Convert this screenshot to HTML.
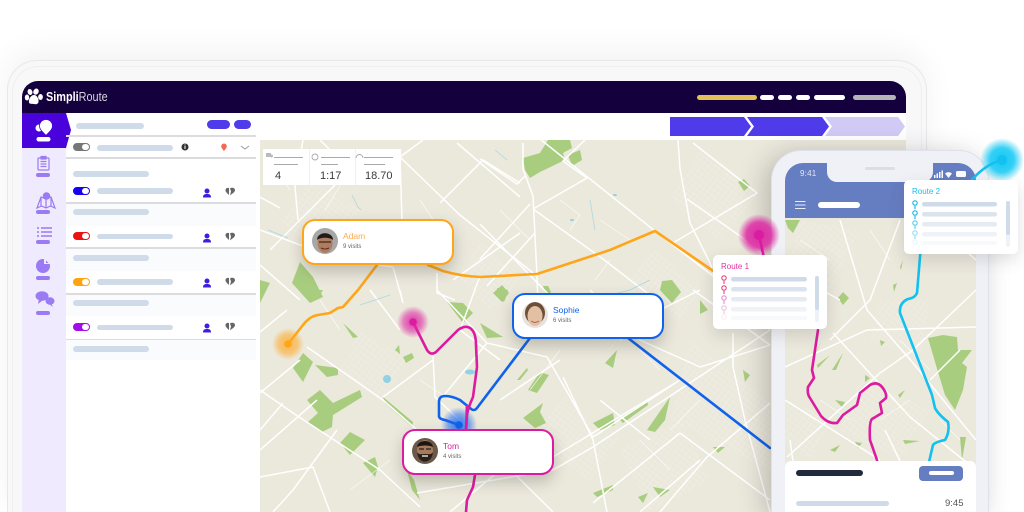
<!DOCTYPE html>
<html><head><meta charset="utf-8"><style>
html,body{margin:0;padding:0;width:1024px;height:512px;overflow:hidden;background:#fff;font-family:"Liberation Sans",sans-serif}
#w{position:relative;width:1024px;height:512px;overflow:hidden;background:#fff;filter:blur(.35px)}
.a{position:absolute}
.bar{position:absolute;border-radius:4px;background:#cfdbe9}
.line{position:absolute;left:66px;width:190px;height:1.5px;background:#dcdcde}
.tg{position:absolute;left:73px;width:15px;height:6px;border-radius:5px;border:1px solid}
.tg i{position:absolute;right:0;top:0;width:7px;height:6px;background:#fff;border-radius:3px}
.card{position:absolute;width:148px;height:42px;background:#fff;border:2px solid;border-radius:13px;box-shadow:0 7px 14px rgba(60,60,50,.26)}
.card b{position:absolute;left:39px;top:10px;font-size:8.5px;font-weight:400}
.card span{position:absolute;left:39px;top:23px;font-size:6px;color:#666}
.card svg{position:absolute;left:8px;top:7px}
.rc{position:absolute;width:114px;height:74px;background:#fff;border-radius:5px;box-shadow:0 6px 16px rgba(60,60,60,.16)}
.rc b{position:absolute;left:8px;top:7px;font-size:8px;font-weight:400}
.nb{position:absolute;left:36px;width:14px;height:4px;border-radius:2px;background:#9a7bf3}
.st{position:absolute;top:170px;font-size:11px;line-height:13px;color:#3a3a3a}
.sb{position:absolute;height:1.5px;background:#aaa}
</style></head><body><div id="w">
<div class="a" style="left:7px;top:60px;width:918px;height:451px;background:#f8f8f9;border:1px solid #e8e8ec;border-bottom:0;border-radius:30px 30px 0 0;box-shadow:0 -10px 30px rgba(0,0,0,.05)"></div>
<div class="a" style="left:12px;top:66px;width:908px;height:445px;background:#f8f8f9;border:1px solid #efeff2;border-bottom:0;border-radius:26px 26px 0 0"></div>
<div class="a" style="left:22px;top:81px;width:884px;height:431px;background:#fff;border-radius:16px 16px 0 0;overflow:hidden">
 <div class="a" style="left:0;top:0;width:884px;height:32px;background:#14003c"></div>
</div>
<!-- logo -->
<svg class="a" style="left:24px;top:88px" width="20" height="18" viewBox="0 0 20 18" fill="#fff"><ellipse cx="6" cy="4" rx="2.4" ry="3" transform="rotate(-20 6 4)"/><ellipse cx="12" cy="3.6" rx="2.6" ry="3.2" transform="rotate(25 12 3.6)"/><ellipse cx="3" cy="9.5" rx="2.2" ry="3"/><ellipse cx="16.5" cy="9" rx="2.4" ry="3"/><path d="M10 7c3 0 5 4 4.500 7-.4 2.300-3 2.500-4.500 2s-4.500.5-5-1.500C4.300 11 7 7 10 7z"/></svg>
<div class="a" style="left:46px;top:90px;font-size:12.5px;line-height:15px;color:#fff;font-weight:700;transform:scaleX(.87);transform-origin:0 0;white-space:nowrap">Simpli<span style="font-weight:400;color:#d5d2de">Route</span></div>
<!-- header bars -->
<div class="bar" style="left:697px;top:95px;width:60px;height:5px;background:#e2c158"></div>
<div class="bar" style="left:760px;top:95px;width:14px;height:5px;background:#fff"></div>
<div class="bar" style="left:778px;top:95px;width:14px;height:5px;background:#fff"></div>
<div class="bar" style="left:796px;top:95px;width:14px;height:5px;background:#fff"></div>
<div class="bar" style="left:814px;top:95px;width:31px;height:5px;background:#fff"></div>
<div class="bar" style="left:853px;top:95px;width:43px;height:5px;background:#b5b5b8"></div>
<!-- steps -->
<svg class="a" style="left:660px;top:113px" width="250" height="28"><polygon points="165,4 238,4 245,13.500 238,23 165,23 172,13.500" fill="#d0caf4"/><polygon points="87,4 162,4 169,13.500 162,23 87,23 94,13.500" fill="#4f3bea"/><polygon points="10,4 84,4 91,13.500 84,23 10,23" fill="#4f3bea"/></svg>
<!-- sidebar -->
<div class="a" style="left:22px;top:148px;width:44px;height:364px;background:#efeafd"></div>
<svg class="a" style="left:22px;top:113px" width="50" height="36"><polygon points="0,0 44,0 49,17 44,35 0,35" fill="#4a02dc"/><g fill="#fff"><circle cx="17" cy="15" r="3.500"/><path d="M24 6.500a6.500 6.500 0 0 1 6.500 6.500c0 4-4 6.500-6.500 9.500-2.500-3-6.500-5.500-6.500-9.500a6.500 6.500 0 0 1 6.500-6.500z" stroke="#4a02dc" stroke-width=".8"/><rect x="14.500" y="24" width="14" height="4.500" rx="2.200"/></g></svg>
<svg class="a" style="left:22px;top:150px" width="44" height="170" fill="none" stroke="#9a7bf3" stroke-width="1.200">
 <rect x="16" y="8" width="11" height="12" rx="1"/><rect x="19" y="6.500" width="5" height="2.500" fill="#9a7bf3"/><path d="M18.500 11.500h6M18.500 14h6M18.500 16.500h6"/>
 <path d="M15 58l4-11 5 2 5-2 4 11-4.500-2-4.500 2-4.500-2z"/><path d="M19 47v9M24 49v9M29 47v9"/><circle cx="24.500" cy="46" r="3.800" fill="#9a7bf3" stroke="none"/>
 <path d="M15 78h2M19 78h11M15 82h2M19 82h11M15 86h2M19 86h11" stroke-width="1.600"/>
 <circle cx="21" cy="116" r="7" fill="#9a7bf3" stroke="none"/><path d="M22 109h5l2 5h-7z" fill="#efeafd" stroke="none"/><path d="M24 110.500l2.500 2.500h-2.500z" fill="#9a7bf3" stroke="none"/>
 <ellipse cx="20" cy="146" rx="6.500" ry="4.800" fill="#9a7bf3" stroke="none"/><path d="M17 149l-1 5 5-4z" fill="#9a7bf3" stroke="none"/><ellipse cx="28" cy="151" rx="4.500" ry="3.800" fill="#9a7bf3" stroke="none"/><path d="M29 153l2 4-4-3z" fill="#9a7bf3" stroke="none"/>
</svg>
<div class="nb" style="top:173px"></div><div class="nb" style="top:210px"></div><div class="nb" style="top:240px"></div><div class="nb" style="top:276px"></div><div class="nb" style="top:311px"></div>
<!-- list -->
<div class="a" style="left:66px;top:203px;width:190px;height:23px;background:#fafbfc"></div>
<div class="a" style="left:66px;top:249px;width:190px;height:22px;background:#fafbfc"></div>
<div class="a" style="left:66px;top:294px;width:190px;height:22px;background:#fafbfc"></div>
<div class="a" style="left:66px;top:340px;width:190px;height:20px;background:#fafbfc"></div>
<div class="line" style="top:135px"></div><div class="line" style="top:157px"></div><div class="line" style="top:202px"></div><div class="line" style="top:247px"></div><div class="line" style="top:293px"></div><div class="line" style="top:338.500px"></div>
<div class="bar" style="left:76px;top:123px;width:68px;height:6px"></div>
<div class="bar" style="left:207px;top:120px;width:23px;height:9px;background:#4f3bea;border-radius:5px"></div>
<div class="bar" style="left:234px;top:120px;width:17px;height:9px;background:#4f3bea;border-radius:5px"></div>
<div class="tg" style="top:143px;background:#777;border-color:#777"><i></i></div>
<div class="bar" style="left:97px;top:145px;width:76px;height:5.500px"></div>
<div class="bar" style="left:73px;top:171px;width:76px;height:5.500px"></div>
<div class="tg" style="top:187px;background:#1a00f0;border-color:#1a00f0"><i></i></div>
<div class="bar" style="left:97px;top:188px;width:76px;height:5.500px"></div>
<div class="bar" style="left:73px;top:209px;width:76px;height:5.500px"></div>
<div class="tg" style="top:232px;background:#ee1111;border-color:#ee1111"><i></i></div>
<div class="bar" style="left:97px;top:233.500px;width:76px;height:5.500px"></div>
<div class="bar" style="left:73px;top:255px;width:76px;height:5.500px"></div>
<div class="tg" style="top:278px;background:#ffa40f;border-color:#ffa40f"><i></i></div>
<div class="bar" style="left:97px;top:279px;width:76px;height:5.500px"></div>
<div class="bar" style="left:73px;top:300px;width:76px;height:5.500px"></div>
<div class="tg" style="top:323px;background:#a30fe8;border-color:#a30fe8"><i></i></div>
<div class="bar" style="left:97px;top:324.500px;width:76px;height:5.500px"></div>
<div class="bar" style="left:73px;top:346px;width:76px;height:5.500px"></div>
<svg class="a" style="left:170px;top:135px" width="90" height="205">
 <circle cx="15" cy="12" r="3.500" fill="#333"/><rect x="14.500" y="11" width="1" height="3" fill="#fff"/><rect x="14.500" y="9.500" width="1" height="1" fill="#fff"/>
 <path d="M54 8.500a2.800 2.800 0 0 1 2.800 2.800c0 2-1.800 3-2.800 5-1-2-2.800-3-2.800-5A2.800 2.800 0 0 1 54 8.500z" fill="#f26a55"/>
 <path d="M71 11l4 3 4-3" fill="none" stroke="#999" stroke-width=".9"/>
 <defs><g id="p"><circle cx="37" cy="0" r="2.500" fill="#3d1fe0"/><path d="M33 6.500c0-3 1.500-3.500 4-3.500s4 .5 4 3.500z" fill="#3d1fe0"/><path d="M59 -3c-2-.5-3.500.5-3.500 2 0 2 1.500 3 3.500 5z" fill="#666"/><path d="M60 4.500l1-4-1-3c2-1.500 5-.5 5 1.500 0 2.500-3 3.500-5 5.500z" fill="#666"/></g></defs>
 <use href="#p" y="56"/><use href="#p" y="101"/><use href="#p" y="146"/><use href="#p" y="191"/>
</svg>
<!-- MAP -->
<svg class="a" style="left:260px;top:140px" width="646" height="372" viewBox="260 140 646 372">
 <defs>
  <pattern id="h" width="5" height="5" patternUnits="userSpaceOnUse" patternTransform="rotate(38)"><path d="M0 0H5M0 0V5" stroke="#fff" stroke-width=".5" opacity=".55"/></pattern>
  <radialGradient id="gO"><stop offset="0" stop-color="#ffa51a" stop-opacity=".75"/><stop offset=".6" stop-color="#ffa51a" stop-opacity=".5"/><stop offset="1" stop-color="#ffa51a" stop-opacity="0"/></radialGradient>
  <radialGradient id="gM"><stop offset="0" stop-color="#dd2aa4" stop-opacity=".95"/><stop offset=".6" stop-color="#dd2aa4" stop-opacity=".55"/><stop offset="1" stop-color="#dd2aa4" stop-opacity="0"/></radialGradient>
  <radialGradient id="gB"><stop offset="0" stop-color="#1a66ee" stop-opacity=".9"/><stop offset=".6" stop-color="#1a66ee" stop-opacity=".5"/><stop offset="1" stop-color="#1a66ee" stop-opacity="0"/></radialGradient>
 </defs>
 <rect x="260" y="140" width="646" height="372" fill="#ebe8dc"/>
 <g fill="url(#h)">
  <polygon points="700,150 760,190 720,240 670,200"/><polygon points="655,250 700,290 680,320 630,280"/><polygon points="480,240 520,280 490,310 460,280"/>
  <polygon points="360,330 410,360 380,400 340,370"/><polygon points="560,400 620,440 590,480 530,440"/><polygon points="620,450 680,420 710,480 650,512"/>
  <polygon points="690,340 770,400 770,470 670,420"/><polygon points="280,220 310,180 360,210 330,260"/><polygon points="600,290 640,320 610,350 570,320"/>
 </g>
 <g fill="#a9cd7f">
  <polygon points="523,158 540,153 548,140 570,140 572,148 563,153 565,160 540,172 530,178 525,170"/><polygon points="568,155 580,150 582,160 572,166"/>
  <polygon points="738,182 744,179 750,186 744,191"/><polygon points="662,281 672,280 681,292 672,303 660,290"/><polygon points="497,288 508,290 504,302 497,297"/><polygon points="543,286 548,286 551,292 547,296"/>
  <polygon points="293,368 303,353 313,362 303,382"/><polygon points="315,365 338,368 338,375 327,377"/>
  <polygon points="307,400 320,390 333,403 360,390 362,397 333,415 332,427 322,432 308,422 318,413"/>
  <polygon points="383,397 413,422 412,427 385,403"/><polygon points="340,443 350,432 365,440 350,455"/><polygon points="363,463 375,457 378,467 375,477"/>
  <polygon points="343,323 358,337 353,338"/><polygon points="403,357 412,353 414,358 406,363"/><polygon points="395,350 399,345 400,354"/>
  <polygon points="528,390 540,372 549,375 537,393"/><polygon points="517,380 527,368 528,370 520,380"/>
  <polygon points="523,418 543,403 540,412 546,423 535,428"/><polygon points="593,423 613,413 615,425 600,430"/><polygon points="605,363 617,350 613,368"/>
  <polygon points="620,420 647,400 648,405 623,423"/><polygon points="647,430 670,397 665,420 655,432"/><polygon points="593,493 613,485 613,490 597,497"/>
  <polygon points="447,302 463,303 473,313 463,323"/><polygon points="480,323 503,337 487,338"/><polygon points="653,487 670,490 660,497"/><polygon points="638,497 648,493 643,503"/>
  <polygon points="500,290 508,290 505,300 495,293"/><polygon points="303,290 323,290 317,300"/><polygon points="292,283 300,262 313,277 323,297 310,303"/><polygon points="260,280 270,283 260,303"/>
  <polygon points="493,293 502,285 509,293 502,302"/><polygon points="407,470 414,480 420,500 412,490"/><polygon points="743,370 750,375 745,382"/><polygon points="713,447 725,447 718,453"/><polygon points="567,310 575,315 570,320"/><polygon points="700,300 708,310 700,314"/>
 </g>
 <g fill="none" stroke="#fff" stroke-width="1.500">
  <path d="M480 159L517 184 525 176M540 139L655 231 713 276 770 330M523 143V169L533 196 537 276 538 306M480 224L560 306M533 209L587 178 563 161 585 140M533 209L603 259 647 293M678 140L680 169 690 223 710 263 722 300M687 199L740 236 770 260M673 243L757 193 693 143M480 259L530 204M535 233L487 286"/>
  <path d="M303 140L295 187 298 220M260 197L280 208M400 157L402 220M423 140L400 157 460 215 537 276M457 143L520 197M440 203L483 160 520 183M520 233L453 280M393 267L403 303 400 290M437 273V293L455 300"/>
  <path d="M260 390L293 413 380 470 420 507M260 332L287 310M260 393L300 360M307 347L383 400 417 430M433 355L435 397 470 430M383 397L433 360M370 290L400 330M437 290L487 343 547 357 593 437 680 380M260 477L313 467 330 512M260 450L317 400M283 403L260 430M337 430L293 490 273 512M563 377L593 440 607 512M553 457L680 380M680 433L593 503M417 493L553 470 593 447 770 330M487 343L440 400M470 430L553 512M500 400L560 360M693 290L770 345M700 367L770 345M733 333V367L745 420 770 512M770 403L707 457 660 512M680 433L770 500M590 290L640 340 700 367"/>
  <path d="M260 230L340 260 393 267M260 265L300 300M320 140L360 180M340 180L310 210 270 250M480 276L460 330 500 360M600 400L650 440M620 340L660 310 700 290M500 470L450 512M640 512L700 460"/>
 </g>
 <g fill="none" stroke="#fff" stroke-width=".7" opacity=".8">
  <path d="M270 160l20 30M350 170l-25 40M420 200l20 30M500 210l30 30M560 200l20 15-10 15M600 220l30 20M610 260l-15 20M320 300l20 30M560 350l-30 40M640 350l20 20M700 400l-30 30M640 440l30 30M350 490l40-30M420 380l30 20M500 440l30 30"/>
 </g>
 <g fill="none" stroke="#8fd2e4" stroke-width=".8" opacity=".7"><path d="M352 195l6 12 3 3M268 230l20 8M360 305l30-10M495 150l12 10M590 200l5 30M650 280l-20 10-20 5"/></g>
 <g fill="#8fd2e4"><ellipse cx="387" cy="379" rx="4" ry="4"/><ellipse cx="470" cy="372" rx="5" ry="2.500"/><ellipse cx="615" cy="195" rx="2" ry="1"/><ellipse cx="572" cy="220" rx="2" ry="1"/></g>
 <!-- routes -->
 <g fill="none" stroke-width="2.600" stroke-linecap="round" stroke-linejoin="round">
  <path d="M288 344L303 325Q310 316 318 315L330 313 338 308 343 307 358 290 377 265M428 265L443 271Q460 276 480 277L537 274 610 250 655 231 722 277" stroke="#ffa51a"/>
  <path d="M530 338L477 408Q474 412 470 408L460 400Q452 396 445 396 439 396 439 402V416Q439 419 445 420L459 425M628 338L770 448" stroke="#0f62ee"/>
  <path d="M413 322L427 350Q431 356 436 352L458 330Q465 325 470 328 476 332 476 345L477 367 473 397Q468 408 467 415L466 430M475 475L473 487 467 500 466 512" stroke="#db1ba0"/>
 </g>
 <circle cx="288" cy="344" r="16" fill="url(#gO)"/><circle cx="288" cy="344" r="3.800" fill="#ffa51a"/>
 <circle cx="413" cy="322" r="16" fill="url(#gM)"/><circle cx="413" cy="322" r="3.800" fill="#db1ba0"/>
 <circle cx="459" cy="425" r="18" fill="url(#gB)"/><circle cx="459" cy="425" r="3.800" fill="#0f62ee"/>
 <path d="M467 405L466 430" stroke="#db1ba0" stroke-width="2.600"/>
</svg>
<!-- stats -->
<div class="a" style="left:263px;top:149px;width:138px;height:36px;background:#fff"></div>
<div class="a" style="left:309px;top:149px;width:1px;height:36px;background:#f0f0f0"></div>
<div class="a" style="left:355px;top:149px;width:1px;height:36px;background:#f0f0f0"></div>
<svg class="a" style="left:263px;top:149px" width="138" height="36"><rect x="3" y="4" width="5" height="4" fill="#bbb"/><circle cx="8.500" cy="7" r="1.500" fill="#bbb"/><circle cx="52" cy="8" r="3" fill="none" stroke="#aaa" stroke-width=".9"/><path d="M93 9a3.500 3.500 0 0 1 7 0" fill="none" stroke="#aaa" stroke-width=".9"/></svg>
<div class="sb" style="left:274px;top:156.500px;width:29px"></div><div class="sb" style="left:274px;top:163.500px;width:24px"></div>
<div class="sb" style="left:321px;top:156.500px;width:29px"></div><div class="sb" style="left:321px;top:163.500px;width:17px"></div>
<div class="sb" style="left:364px;top:156.500px;width:29px"></div><div class="sb" style="left:364px;top:163.500px;width:21px"></div>
<div class="st" style="left:275px">4</div><div class="st" style="left:320px">1:17</div><div class="st" style="left:365px">18.70</div>
<!-- PHONE -->
<div class="a" style="left:771px;top:150px;width:216px;height:361px;background:#f0f1f6;border:1px solid #dfe1ea;border-bottom:0;border-radius:30px 30px 0 0;box-shadow:-6px 4px 26px rgba(40,40,40,.25)"></div>
<div class="a" style="left:785px;top:163px;width:191px;height:349px;background:#ebe8dc;border-radius:18px 18px 0 0;overflow:hidden">
 <svg class="a" style="left:0;top:0" width="191" height="349" viewBox="785 163 191 349">
  <g fill="url(#h)"><polygon points="800,220 860,230 830,290 790,260"/><polygon points="860,380 930,410 900,460 840,430"/><polygon points="790,400 830,420 810,460 785,440"/><polygon points="880,300 930,300 920,360 870,340"/></g>
  <g fill="#a9cd7f"><polygon points="785,220 800,220 793,233 788,228"/><polygon points="838,298 843,292 849,298 843,305"/><polygon points="928,338 943,335 957,337 958,350 972,350 962,363 967,367 963,390 955,410 945,395 938,372"/><polygon points="960,437 966,437 962,460"/><polygon points="855,442 862,443 858,448"/><polygon points="817,365 830,355 818,368"/><polygon points="832,370 843,353 836,370"/><polygon points="817,350 822,340 812,362"/><polygon points="835,400 845,402 842,407"/><polygon points="898,395 905,390 900,398"/><polygon points="865,375 870,378 865,382"/><polygon points="900,267 903,260 901,270"/><polygon points="893,285 897,283 894,292"/><polygon points="880,340 885,342 881,346"/><polygon points="903,440 920,441 905,444"/><polygon points="830,450 840,445 835,452"/></g>
  <g fill="none" stroke="#fff" stroke-width="1.500">
   <path d="M785 367L867 330 977 327M853 263L867 310 913 363 976 440M787 457L880 373 913 350 976 290M833 333L910 417 976 470M785 400L880 460M840 220L853 263M900 220L870 300 830 340M785 270L840 300M930 220L976 260M790 440L800 512M885 430L900 461M950 220L976 210M930 380L960 350"/>
  </g>
  <g fill="none" stroke="#fff" stroke-width=".7" opacity=".8"><path d="M800 240l30 20M870 230l20 30M900 340l30 30M820 400l30 20M880 420l30-20M940 420l20 20M800 300l20 30"/></g>
  <g fill="none" stroke-width="2.600" stroke-linecap="round" stroke-linejoin="round">
   <path d="M818 330L812 370 814 378 808 387Q807 394 810 398L821 416Q828 424 837 423L843 415 857 405 860 393 870 385Q877 381 882 387 887 393 886 398L880 403 882 413 872 419Q869 422 870 440L877 460" stroke="#db1ba0"/>
   <path d="M921 245L917 293Q915 298 908 299 899 303 900 313L932 395 935 408Q938 414 948 422 950 432 945 440 935 442 933 445L929 462" stroke="#12c1ef"/>
  </g>
 </svg>
 <div class="a" style="left:0;top:0;width:191px;height:55px;background:#657dc1"></div>
 <div class="a" style="left:42px;top:0;width:106px;height:19px;background:#f0f1f6;border-radius:0 0 10px 10px"></div>
 <div class="a" style="left:0;top:298px;width:191px;height:51px;background:#fff;border-radius:6px 6px 0 0"></div>
</div>
<div class="a" style="left:865px;top:167px;width:30px;height:2.500px;border-radius:2px;background:#dcdee6"></div>
<div class="a" style="left:800px;top:169px;font-size:8px;color:#e4e8f4;line-height:10px;letter-spacing:.2px">9:41</div>
<svg class="a" style="left:934px;top:169px" width="36" height="11" fill="#fff"><rect x="0" y="6" width="1.500" height="3"/><rect x="2.500" y="4.500" width="1.500" height="4.500"/><rect x="5" y="3" width="1.500" height="6"/><rect x="7.500" y="1.500" width="1.500" height="7.500"/><path d="M11 4.500a5 5 0 0 1 7 0l-3.500 4.500z"/><rect x="22" y="2" width="10" height="6" rx="1.500"/></svg>
<svg class="a" style="left:795px;top:200px" width="11" height="10" stroke="#e8ecf6" stroke-width="1"><path d="M0 1.500H10.500M0 5H10.500M0 8.500H10.500"/></svg>
<div class="a" style="left:818px;top:202px;width:42px;height:6px;border-radius:3px;background:#fff"></div>
<div class="a" style="left:796px;top:470px;width:67px;height:6px;border-radius:3px;background:#222a3d"></div>
<div class="a" style="left:919px;top:466px;width:44px;height:15px;border-radius:4px;background:#657dc1"></div>
<div class="a" style="left:929px;top:471px;width:25px;height:4px;border-radius:2px;background:#fff"></div>
<div class="bar" style="left:796px;top:501px;width:93px;height:5px"></div>
<div class="a" style="left:945px;top:498px;font-size:9.500px;line-height:11px;color:#555">9:45</div>
<!-- cards -->
<div class="card" style="left:302px;top:219px;border-color:#ffa51a"><svg width="26" height="26"><clipPath id="c1"><circle cx="13" cy="13" r="13"/></clipPath><g clip-path="url(#c1)"><rect width="26" height="26" fill="#a9a7a6"/><ellipse cx="13" cy="15" rx="7.500" ry="10" fill="#b07c60"/><path d="M5 12c0-9 16-9 16 0-3-3-13-3-16 0z" fill="#1f1b18"/><path d="M7 14h12" stroke="#3a2a22" stroke-width="1.200"/><path d="M9 20c3 1.500 5 1.500 8 0" stroke="#5a2a22" fill="none"/></g></svg><b style="color:#ffa94d">Adam</b><span>9 visits</span></div>
<div class="card" style="left:512px;top:293px;border-color:#0f62ee"><svg width="26" height="26"><clipPath id="c2"><circle cx="13" cy="13" r="13"/></clipPath><g clip-path="url(#c2)"><rect width="26" height="26" fill="#e8e2da"/><ellipse cx="13" cy="11" rx="10" ry="11" fill="#6b4f36"/><ellipse cx="13" cy="14" rx="7.500" ry="10" fill="#e3bfa4"/><path d="M9 19c3 2 5 2 8 0" stroke="#b0604e" fill="none"/></g></svg><b style="color:#0f62ee">Sophie</b><span>6 visits</span></div>
<div class="card" style="left:402px;top:429px;border-color:#db1ba0"><svg width="26" height="26"><clipPath id="c3"><circle cx="13" cy="13" r="13"/></clipPath><g clip-path="url(#c3)"><rect width="26" height="26" fill="#6b5a4a"/><ellipse cx="13" cy="13" rx="8" ry="11" fill="#a87a5c"/><path d="M5 9c1-8 15-8 16 0-4-2-12-2-16 0z" fill="#1c1612"/><path d="M5 14c1 13 15 13 16 0-2 3-4 2-8 2s-6 1-8-2z" fill="#2a2019"/><path d="M7 11h5M14 11h5" stroke="#222" stroke-width="1.300"/><path d="M10 18h6" stroke="#fff" stroke-width="1.200"/></g></svg><b style="color:#db1ba0">Tom</b><span>4 visits</span></div>
<!-- glows and route cards -->
<svg class="a" style="left:730px;top:130px" width="294" height="130" viewBox="730 130 294 130">
 <defs><radialGradient id="gC"><stop offset="0" stop-color="#12c8f4"/><stop offset=".55" stop-color="#12c8f4" stop-opacity=".85"/><stop offset="1" stop-color="#12c8f4" stop-opacity="0"/></radialGradient><radialGradient id="gP2"><stop offset="0" stop-color="#dd2aa4"/><stop offset=".6" stop-color="#dd2aa4" stop-opacity=".85"/><stop offset="1" stop-color="#dd2aa4" stop-opacity="0"/></radialGradient></defs>
 <circle cx="759" cy="235" r="21" fill="url(#gP2)"/><circle cx="759" cy="235" r="5" fill="#db1ba0"/><path d="M759 235L764 258" stroke="#db1ba0" stroke-width="2.600"/>
 <circle cx="1002" cy="160" r="22" fill="url(#gC)"/><circle cx="1002" cy="160" r="5" fill="#12c1ef"/><path d="M1002 160C990 163 980 170 970 182" fill="none" stroke="#12c1ef" stroke-width="2.600"/>
</svg>
<div class="rc" style="left:713px;top:255px"><b style="color:#e0309f">Route 1</b>
 <svg class="a" style="left:0;top:0" width="114" height="74"><g fill="none" stroke="#e8437f" stroke-width="1.100"><g><circle cx="11" cy="23" r="2.200"/><path d="M11 26v3"/></g><g><circle cx="11" cy="33" r="2.200"/><path d="M11 36v3"/></g><g opacity=".6" stroke="#d048a8"><circle cx="11" cy="43" r="2.200"/><path d="M11 46v3"/></g><g opacity=".35" stroke="#d048a8"><circle cx="11" cy="53" r="2.200"/><path d="M11 56v3"/></g><g opacity=".1"><circle cx="11" cy="62" r="2.200"/></g></g><g><rect x="18" y="22" width="76" height="4.500" rx="2.200" fill="#cfdbe9"/><rect x="18" y="32" width="76" height="4.500" rx="2.200" fill="#dbe3ee"/><rect x="18" y="42" width="76" height="4.500" rx="2.200" fill="#e6ebf3"/><rect x="18" y="52" width="76" height="4.500" rx="2.200" fill="#eff2f7"/><rect x="18" y="61" width="76" height="4" rx="2" fill="#f8f9fb"/><rect x="102" y="21" width="4" height="46" rx="2" fill="#eef1f6"/><rect x="102" y="21" width="4" height="34" rx="2" fill="#cfdbe9"/></g></svg></div>
<div class="rc" style="left:904px;top:180px;height:74px"><b style="color:#12c1ef">Route 2</b>
 <svg class="a" style="left:0;top:0" width="114" height="74"><g fill="none" stroke="#12b5e5" stroke-width="1.100"><g><circle cx="11" cy="23" r="2.200"/><path d="M11 26v3"/></g><g><circle cx="11" cy="33" r="2.200"/><path d="M11 36v3"/></g><g opacity=".7"><circle cx="11" cy="43" r="2.200"/><path d="M11 46v3"/></g><g opacity=".45"><circle cx="11" cy="53" r="2.200"/><path d="M11 56v3"/></g><g opacity=".1"><circle cx="11" cy="62" r="2.200"/></g></g><g><rect x="18" y="22" width="75" height="4.500" rx="2.200" fill="#cfdbe9"/><rect x="18" y="32" width="75" height="4.500" rx="2.200" fill="#dbe3ee"/><rect x="18" y="42" width="75" height="4.500" rx="2.200" fill="#e6ebf3"/><rect x="18" y="52" width="75" height="4.500" rx="2.200" fill="#eff2f7"/><rect x="18" y="61" width="75" height="4" rx="2" fill="#f8f9fb"/><rect x="102" y="21" width="4" height="46" rx="2" fill="#eef1f6"/><rect x="102" y="21" width="4" height="34" rx="2" fill="#cfdbe9"/></g></svg></div>
</div></body></html>
